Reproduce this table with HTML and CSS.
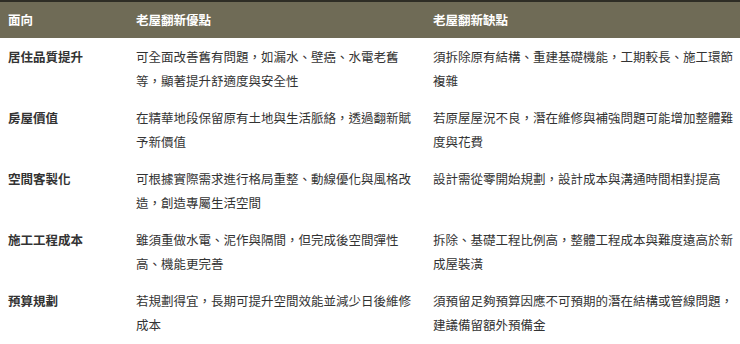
FILE: index.html
```html
<!DOCTYPE html>
<html lang="zh-Hant">
<head>
<meta charset="utf-8">
<link rel="stylesheet" href="styles.css">
</head>
<body>
<table class="cmp">
  <colgroup>
    <col class="c1"><col class="c2"><col class="c3">
  </colgroup>
  <thead>
    <tr><th>面向</th><th>老屋翻新優點</th><th>老屋翻新缺點</th></tr>
  </thead>
  <tbody>
    <tr><td class="k">居住品質提升</td><td>可全面改善舊有問題，如漏水、壁癌、水電老舊等，顯著提升舒適度與安全性</td><td>須拆除原有結構、重建基礎機能，工期較長、施工環節複雜</td></tr>
    <tr><td class="k">房屋價值</td><td>在精華地段保留原有土地與生活脈絡，透過翻新賦予新價值</td><td>若原屋屋況不良，潛在維修與補強問題可能增加整體難度與花費</td></tr>
    <tr><td class="k">空間客製化</td><td>可根據實際需求進行格局重整、動線優化與風格改造，創造專屬生活空間</td><td>設計需從零開始規劃，設計成本與溝通時間相對提高</td></tr>
    <tr><td class="k">施工工程成本</td><td>雖須重做水電、泥作與隔間，但完成後空間彈性高、機能更完善</td><td>拆除、基礎工程比例高，整體工程成本與難度遠高於新成屋裝潢</td></tr>
    <tr><td class="k">預算規劃</td><td>若規劃得宜，長期可提升空間效能並減少日後維修成本</td><td>須預留足夠預算因應不可預期的潛在結構或管線問題，建議備留額外預備金</td></tr>
  </tbody>
</table>
</body>
</html>
```

FILE: styles.css
```css
html, body {
  margin: 0;
  padding: 0;
  background: #ffffff;
}
body {
  font-family: "Noto Sans CJK TC", "Noto Sans", sans-serif;
  font-size: 12.5px;
  color: #333333;
}
.cmp {
  width: 740px;
  border-collapse: collapse;
  table-layout: fixed;
  border-top: 2px solid #2e2d25;
}
.c1 { width: 128px; }
.c2 { width: 297px; }
.c3 { width: 315px; }
.cmp th {
  background: #6f6b56;
  color: #ffffff;
  font-weight: 700;
  text-align: left;
  height: 36px;
  padding: 0 8px;
  line-height: 24px;
  vertical-align: middle;
}
.cmp td {
  padding: 7px 8px 6px;
  line-height: 24px;
  vertical-align: top;
}
.cmp td:last-child {
  padding-right: 3px;
}
.cmp td.k {
  font-weight: 700;
}
```
